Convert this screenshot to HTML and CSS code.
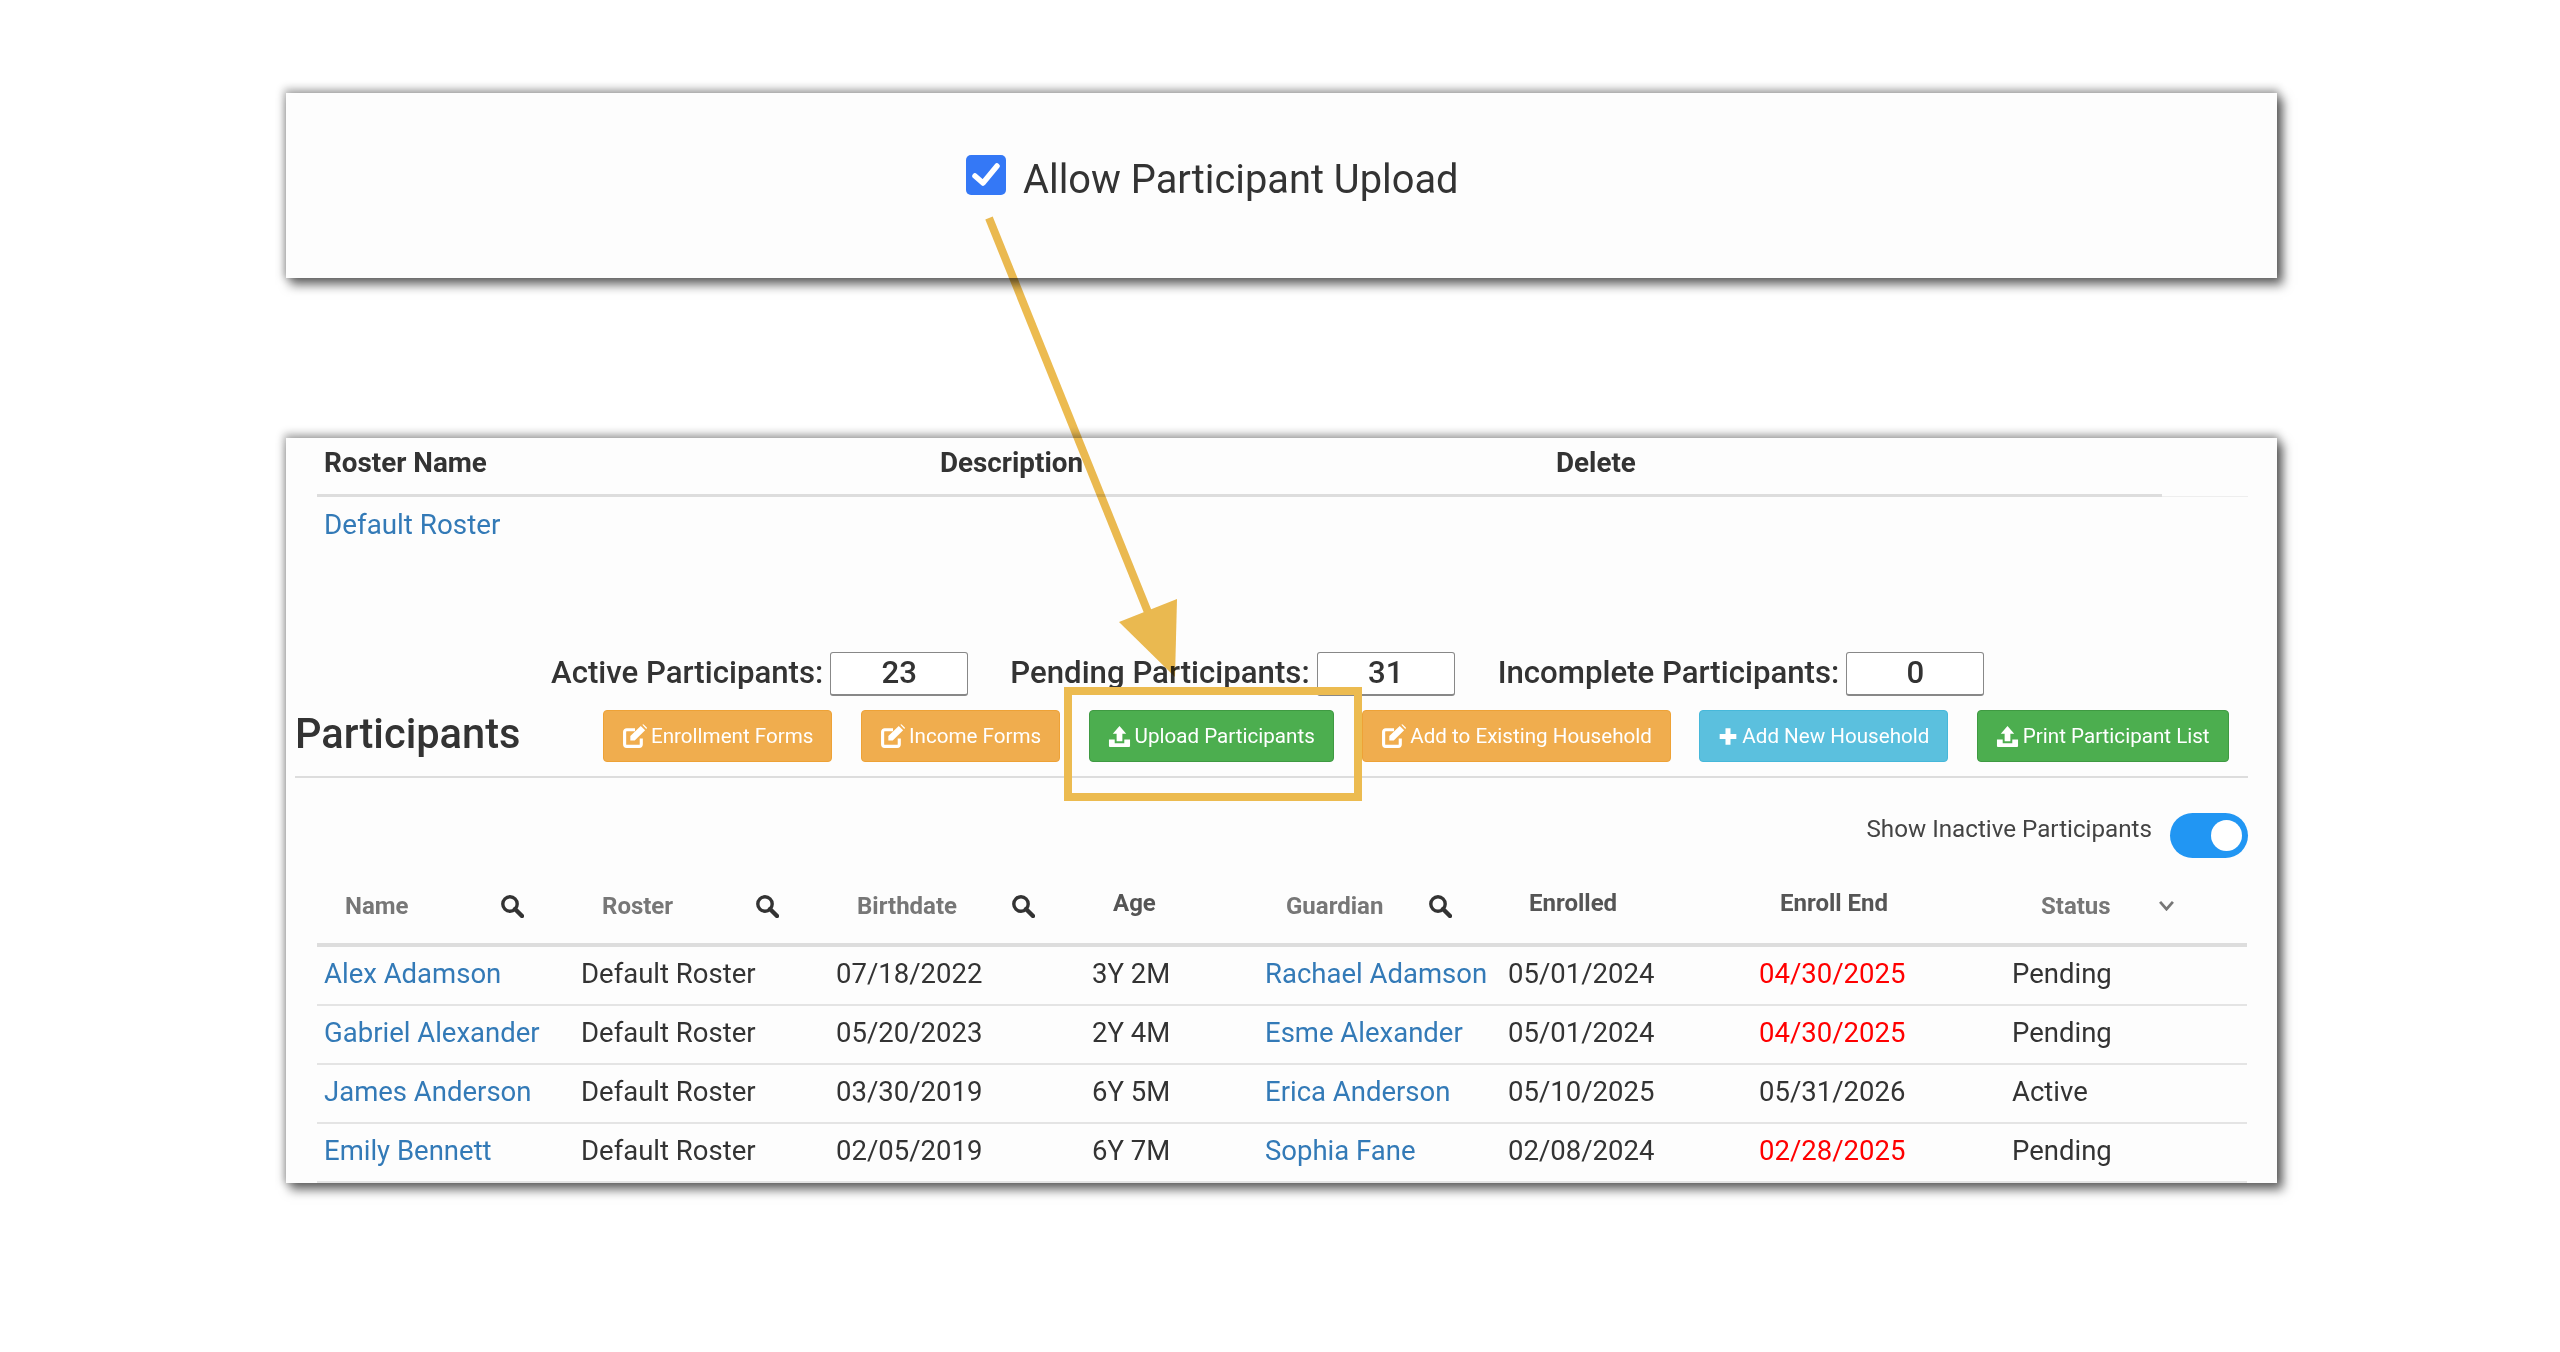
FILE: index.html
```html
<!DOCTYPE html>
<html lang="en">
<head>
<meta charset="utf-8">
<title>Allow Participant Upload</title>
<link rel="stylesheet" href="styles.css">
</head>
<body>
<svg width="0" height="0" class="defs">
  <symbol id="i-search" viewBox="0 0 24 24"><circle cx="10" cy="10" r="7.2" fill="none" stroke="currentColor" stroke-width="3.4"/><path d="M15 15l7 7" fill="none" stroke="currentColor" stroke-width="4.4" stroke-linecap="round"/></symbol>
  <symbol id="i-edit" viewBox="0 0 24 24"><path d="M18.5 14v5.5a2 2 0 0 1-2 2h-12a2 2 0 0 1-2-2v-12a2 2 0 0 1 2-2h8" fill="none" stroke="currentColor" stroke-width="3"/><path d="M8 11.5L18 1.8l4.2 4.2-10 9.800H8zM19.500.8l1-.6 3.600 3.600-.8 1z" fill="currentColor"/></symbol>
  <symbol id="i-upload" viewBox="0 0 24 24"><path d="M12 1l7 8h-4v8H9V9H5z" fill="currentColor"/><path d="M1 15h6v4h10v-4h6v7a1 1 0 0 1-1 1H2a1 1 0 0 1-1-1z" fill="currentColor"/></symbol>
  <symbol id="i-plus" viewBox="0 0 24 24"><path d="M9 2h6v7h7v6h-7v7H9v-7H2V9h7z" fill="currentColor"/></symbol>
</svg>

<main class="stage">
  <section class="panel panel-top">
    <label class="allow">
      <span class="checkbox"><svg viewBox="0 0 40 40" width="40" height="40"><path d="M9 21l8 7L31 11" fill="none" stroke="#fff" stroke-width="5.500" stroke-linecap="round" stroke-linejoin="round"/></svg></span>
      <span class="allow-text">Allow Participant Upload</span>
    </label>
  </section>

  <section class="panel panel-main">
    <div class="roster-wrap">
      <div class="roster-head">
        <span>Roster Name</span><span>Description</span><span>Delete</span>
      </div>
    </div>
    <div class="roster-row"><a href="#">Default Roster</a></div>

    <div class="counts">
      <span class="count-label">Active Participants:</span><span class="count-box">23</span>
      <span class="count-label gap-a">Pending Participants:</span><span class="count-box">31</span>
      <span class="count-label gap-b">Incomplete Participants:</span><span class="count-box">0</span>
    </div>

    <div class="title-row">
      <h2>Participants</h2>
      <div class="actions">
        <a class="btn warn" href="#"><svg class="ic"><use href="#i-edit"/></svg>Enrollment Forms</a>
        <a class="btn warn" href="#"><svg class="ic"><use href="#i-edit"/></svg>Income Forms</a>
        <a class="btn good" href="#"><svg class="ic ic-up"><use href="#i-upload"/></svg>Upload Participants</a>
        <a class="btn warn" href="#"><svg class="ic"><use href="#i-edit"/></svg>Add to Existing Household</a>
        <a class="btn info" href="#"><svg class="ic ic-plus"><use href="#i-plus"/></svg>Add New Household</a>
        <a class="btn good" href="#"><svg class="ic ic-up"><use href="#i-upload"/></svg>Print Participant List</a>
      </div>
    </div>

    <div class="toggle-row">
      <span>Show Inactive Participants</span>
      <span class="toggle"><span class="knob"></span></span>
    </div>

    <table class="grid">
      <colgroup>
        <col class="c1"><col class="c2"><col class="c3"><col class="c4"><col class="c5"><col class="c6"><col class="c7"><col class="c8">
      </colgroup>
      <thead>
        <tr>
          <th><div class="th-in"><span>Name</span><svg class="search"><use href="#i-search"/></svg></div></th>
          <th><div class="th-in"><span>Roster</span><svg class="search"><use href="#i-search"/></svg></div></th>
          <th><div class="th-in"><span>Birthdate</span><svg class="search"><use href="#i-search"/></svg></div></th>
          <th><div class="th-in raised"><span>Age</span></div></th>
          <th><div class="th-in guard"><span>Guardian</span><svg class="search"><use href="#i-search"/></svg></div></th>
          <th><div class="th-in raised"><span>Enrolled</span></div></th>
          <th><div class="th-in raised"><span>Enroll End</span></div></th>
          <th><div class="th-in status"><span>Status</span><svg class="chev" viewBox="0 0 18 12"><path d="M2 2l7 8 7-8" fill="none" stroke="currentColor" stroke-width="3"/></svg></div></th>
        </tr>
      </thead>
      <tbody>
        <tr><td><a href="#">Alex Adamson</a></td><td>Default Roster</td><td>07/18/2022</td><td>3Y 2M</td><td><a href="#">Rachael Adamson</a></td><td>05/01/2024</td><td class="late">04/30/2025</td><td>Pending</td></tr>
        <tr><td><a href="#">Gabriel Alexander</a></td><td>Default Roster</td><td>05/20/2023</td><td>2Y 4M</td><td><a href="#">Esme Alexander</a></td><td>05/01/2024</td><td class="late">04/30/2025</td><td>Pending</td></tr>
        <tr><td><a href="#">James Anderson</a></td><td>Default Roster</td><td>03/30/2019</td><td>6Y 5M</td><td><a href="#">Erica Anderson</a></td><td>05/10/2025</td><td>05/31/2026</td><td>Active</td></tr>
        <tr><td><a href="#">Emily Bennett</a></td><td>Default Roster</td><td>02/05/2019</td><td>6Y 7M</td><td><a href="#">Sophia Fane</a></td><td>02/08/2024</td><td class="late">02/28/2025</td><td>Pending</td></tr>
      </tbody>
    </table>
  </section>

  <svg class="arrow" viewBox="0 0 2560 1352" width="2560" height="1352" aria-hidden="true">
    <path d="M989 218L1160 642" fill="none" stroke="#ecbb50" stroke-width="8"/>
    <path d="M1177 599L1119 622L1175 677z" fill="#ecbb50"/>
  </svg>
  <div class="highlight"></div>
</main>
</body>
</html>
```
FILE: styles.css
```css
* { box-sizing: border-box; }
html, body { margin: 0; padding: 0; background: #fff; }
body { font-family: Roboto, "Liberation Sans", sans-serif; color: #333; }
a { color: #337ab7; text-decoration: none; }
.defs { position: absolute; }

.stage {
  position: relative;
  width: 2560px;
  height: 1352px;
  padding: 93px 0 0 286px;
  overflow: hidden;
}
.panel {
  width: 1991px;
  background: #fdfdfd;
  box-shadow: 5px 6px 10px 1px rgba(0, 0, 0, .55), 0 -2px 8px 2px rgba(0, 0, 0, .3);
}
.panel-top { height: 185px; padding: 62px 0 0 680px; }
.panel-main { height: 745px; margin-top: 160px; padding: 0 29px 0 9px; }

.allow { display: flex; align-items: flex-start; gap: 17px; font-size: 39.800px; color: #333; line-height: 40px; }
.allow-text { padding-top: 5px; }
.checkbox { width: 40px; height: 40px; border-radius: 5px; background: #3478f6; display: block; }
.checkbox svg { display: block; }

.roster-wrap { margin-left: 22px; border-bottom: 1px solid #eee; height: 59px; }
.roster-head {
  width: 1845px;
  height: 59px;
  padding-left: 7px;
  display: grid;
  grid-template-columns: 616px 616px 1fr;
  align-items: center;
  font-size: 27.800px;
  font-weight: 700;
  color: #333;
  border-bottom: 3px solid #ddd;
}
.roster-head span { padding-bottom: 7px; }
.roster-row { height: 54px; padding-left: 29px; display: flex; align-items: center; font-size: 27.800px; }

.counts {
  margin-top: 101px;
  padding-left: 256px;
  height: 44px;
  display: flex;
  align-items: center;
  font-size: 31.200px;
  font-weight: 500;
}
.count-label { margin-right: 7px; padding-bottom: 3px; }
.gap-a { margin-left: 42px; }
.gap-b { margin-left: 43px; }
.count-box {
  width: 138px;
  height: 44px;
  padding-bottom: 3px;
  border: 1px solid #888;
  border-bottom-width: 2px;
  border-radius: 3px;
  background: #fff;
  display: flex;
  align-items: center;
  justify-content: center;
}

.title-row { margin-top: 14px; height: 68px; display: flex; border-bottom: 2px solid #ddd; }
.title-row h2 { margin: 0; flex: none; width: 308px; height: 52px; font-size: 41.600px; line-height: 48px; font-weight: 500; color: #333; }
.actions { display: flex; gap: 28.500px; }
.btn {
  height: 52px;
  padding: 0 18px;
  display: flex;
  align-items: center;
  gap: 4px;
  font-size: 20.600px;
  color: #fff;
  white-space: nowrap;
  border: 1px solid;
  border-radius: 4px;
}
.ic { width: 25px; height: 25px; flex: none; }
.ic-up { width: 23px; }
.ic-plus { width: 20px; }
.warn { background: #f0ad4e; border-color: #eea236; }
.good { background: #4cae4f; border-color: #3f9a42; }
.info { background: #5bc0de; border-color: #46b8da; }

.toggle-row {
  margin-top: 35px;
  height: 44px;
  display: flex;
  justify-content: flex-end;
  gap: 18px;
  font-size: 24.200px;
  color: #444;
}
.toggle-row > span:first-child { line-height: 32px; }
.toggle { width: 78px; height: 45px; border-radius: 23px; background: #2196f3; display: flex; align-items: center; justify-content: flex-end; padding-right: 6px; }
.knob { width: 31px; height: 31px; border-radius: 50%; background: #fff; }

.grid { margin-left: 22px; width: 1930px; table-layout: fixed; border-collapse: separate; border-spacing: 0; }
.c1 { width: 257px; } .c2 { width: 255px; } .c3 { width: 256px; } .c4 { width: 173px; }
.c5 { width: 243px; } .c6 { width: 251px; } .c7 { width: 253px; } .c8 { width: 242px; }
.grid th { height: 90px; padding: 0; border-bottom: 4px solid #ddd; text-align: left; font-weight: 700; font-size: 24px; color: #777; }
.th-in { display: flex; align-items: center; padding: 13px 0 2px 28px; height: 86px; color: #777; }
.th-in .search { margin-left: auto; margin-right: 50px; width: 24px; height: 24px; color: #333; }
.th-in.raised { padding-bottom: 8px; color: #555; }
.th-in.guard .search { margin-right: 49px; }
.th-in.status { padding-left: 36px; }
.chev { width: 17px; height: 11px; margin-left: 47px; color: #777; }
.grid td { height: 59px; padding: 0 0 5px 7px; border-bottom: 2px solid #e4e4e4; font-size: 27.500px; color: #333; white-space: nowrap; }
.grid td.late { color: #f00; }

.arrow { position: absolute; left: 0; top: 0; mix-blend-mode: multiply; pointer-events: none; }
.highlight {
  position: absolute;
  left: 1064px;
  top: 687px;
  width: 298px;
  height: 114px;
  border: 8px solid #ecbb50;
  pointer-events: none;
}
```
